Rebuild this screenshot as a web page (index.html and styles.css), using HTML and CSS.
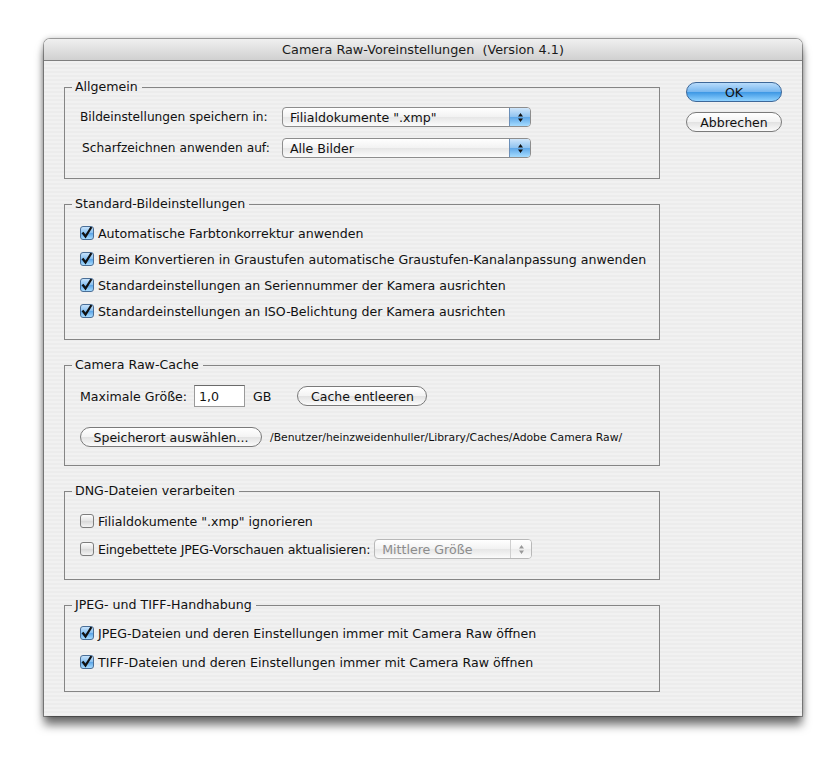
FILE: index.html
```html
<!DOCTYPE html>
<html lang="de">
<head>
    <meta charset="UTF-8">
    <title>Camera Raw-Voreinstellungen</title>
    <link rel="stylesheet" href="styles.css">
</head>
<body>
    <div class="window">
        <div class="titlebar">Camera Raw-Voreinstellungen&nbsp; (Version 4.1)</div>
        <div class="content">
            <div class="groups">
                <!-- Allgemein -->
                <fieldset class="group group-general">
                    <legend>Allgemein</legend>
                    <div class="row field-row">
                        <span class="field-label">Bildeinstellungen speichern in:</span>
                        <div class="popup">
                            <span class="popup-text">Filialdokumente ".xmp"</span>
                            <span class="popup-arrows">
                                <svg width="7" height="11" viewBox="0 0 7 11"><path d="M3.5 1 L6 4.5 H1 Z M3.5 10 L6 6.5 H1 Z" fill="#111"/></svg>
                            </span>
                        </div>
                    </div>
                    <div class="row field-row">
                        <span class="field-label second">Scharfzeichnen anwenden auf:</span>
                        <div class="popup">
                            <span class="popup-text">Alle Bilder</span>
                            <span class="popup-arrows">
                                <svg width="7" height="11" viewBox="0 0 7 11"><path d="M3.5 1 L6 4.5 H1 Z M3.5 10 L6 6.5 H1 Z" fill="#111"/></svg>
                            </span>
                        </div>
                    </div>
                </fieldset>

                <!-- Standard-Bildeinstellungen -->
                <fieldset class="group group-defaults">
                    <legend>Standard-Bildeinstellungen</legend>
                    <label class="row check checked"><span class="box"></span>Automatische Farbtonkorrektur anwenden</label>
                    <label class="row check checked"><span class="box"></span>Beim Konvertieren in Graustufen automatische Graustufen-Kanalanpassung anwenden</label>
                    <label class="row check checked"><span class="box"></span>Standardeinstellungen an Seriennummer der Kamera ausrichten</label>
                    <label class="row check checked"><span class="box"></span>Standardeinstellungen an ISO-Belichtung der Kamera ausrichten</label>
                </fieldset>

                <!-- Camera Raw-Cache -->
                <fieldset class="group group-cache">
                    <legend>Camera Raw-Cache</legend>
                    <div class="row cache-row">
                        <span>Maximale Größe:</span>
                        <span class="textfield">1,0</span>
                        <span class="unit">GB</span>
                        <span class="button cache-btn">Cache entleeren</span>
                    </div>
                    <div class="row path-row">
                        <span class="button path-btn">Speicherort auswählen...</span>
                        <span class="path">/Benutzer/heinzweidenhuller/Library/Caches/Adobe Camera Raw/</span>
                    </div>
                </fieldset>

                <!-- DNG -->
                <fieldset class="group group-dng">
                    <legend>DNG-Dateien verarbeiten</legend>
                    <label class="row check"><span class="box"></span>Filialdokumente ".xmp" ignorieren</label>
                    <div class="row check dng-row">
                        <span class="box"></span><span class="dng-label">Eingebettete JPEG-Vorschauen aktualisieren:</span>
                        <div class="popup popup-disabled">
                            <span class="popup-text">Mittlere Größe</span>
                            <span class="popup-arrows">
                                <svg width="7" height="11" viewBox="0 0 7 11"><path d="M3.5 1 L6 4.5 H1 Z M3.5 10 L6 6.5 H1 Z" fill="#999"/></svg>
                            </span>
                        </div>
                    </div>
                </fieldset>

                <!-- JPEG / TIFF -->
                <fieldset class="group group-jpeg">
                    <legend>JPEG- und TIFF-Handhabung</legend>
                    <label class="row check checked"><span class="box"></span>JPEG-Dateien und deren Einstellungen immer mit Camera Raw öffnen</label>
                    <label class="row check checked"><span class="box"></span>TIFF-Dateien und deren Einstellungen immer mit Camera Raw öffnen</label>
                </fieldset>
            </div>

            <div class="actions">
                <span class="button default-btn">OK</span>
                <span class="button">Abbrechen</span>
            </div>
        </div>
    </div>
</body>
</html>
```

FILE: styles.css
```css
/* Page */
html, body {
    height: 100%;
}
body {
    margin: 0;
    padding: 39px 0 0 44px;
    box-sizing: border-box;
    background: #fff;
    font-family: "DejaVu Sans", "Liberation Sans", sans-serif;
    font-size: 12.6px;
    color: #111;
}

/* Window */
.window {
    width: 758px;
    height: 677px;
    box-sizing: border-box;
    border-radius: 6px 6px 0 0;
    background: repeating-linear-gradient(#ececec 0, #ececec 2px, #f1f1f1 2px, #f1f1f1 4px);
    box-shadow: 0 9px 10px rgba(0, 0, 0, 0.55), 0 0 6px rgba(0, 0, 0, 0.3), 0 0 0 1px rgba(0, 0, 0, 0.3);
}
.titlebar {
    height: 21px;
    line-height: 22px;
    text-align: center;
    font-size: 12.8px;
    color: #1a1a1a;
    border-radius: 6px 6px 0 0;
    background: linear-gradient(#f0f0f0, #d0d0d0);
    border-bottom: 1px solid #7f7f7f;
}
.content {
    display: flex;
    padding: 18px 0 0 20px;
}

/* Group boxes */
.groups {
    width: 596px;
    display: flex;
    flex-direction: column;
    gap: 17px;
}
.group {
    margin: 0;
    padding: 0 0 0 15px;
    border: 1px solid #858585;
    min-width: 0;
    box-sizing: border-box;
}
.group legend {
    padding: 0 4px 0 3px;
    margin-left: -8px;
    line-height: 16px;
}
.row {
    display: flex;
    align-items: center;
    white-space: nowrap;
}
.group-general { padding-top: 12px; padding-bottom: 20px; }
.group-general .row + .row { margin-top: 11px; }
.group-defaults { padding-top: 12px; padding-bottom: 19px; }
.group-defaults .row + .row { margin-top: 8px; }
.group-cache { padding-top: 12px; padding-bottom: 18px; }
.group-dng { padding-top: 13px; padding-bottom: 20px; }
.group-dng .row + .row { margin-top: 9px; }
.group-jpeg { padding-top: 11px; padding-bottom: 20px; }
.group-jpeg .row + .row { margin-top: 11px; }

/* Popup menus */
.field-row { height: 20px; }
.field-label {
    width: 202px;
    font-size: 12.2px;
}
.field-label.second { padding-left: 2px; width: 200px; }
.popup {
    display: flex;
    align-items: center;
    width: 249px;
    height: 20px;
    box-sizing: border-box;
    border: 1px solid #8d8d8d;
    border-radius: 4px;
    background: linear-gradient(#ffffff, #f2f2f2 50%, #e6e6e6 51%, #fbfbfb);
    overflow: hidden;
}
.popup-text {
    flex: 1;
    padding-left: 7px;
}
.popup-arrows {
    width: 20px;
    height: 100%;
    display: flex;
    align-items: center;
    justify-content: center;
    border-left: 1px solid #6b8fb8;
    background: linear-gradient(#cfe6fb, #8ec2ef 50%, #5ea7e8 51%, #a5dcff);
}
.dng-label { letter-spacing: -0.2px; }
.popup-disabled {
    width: 158px;
    height: 20px;
    margin-left: 4px;
    border-color: #b8b8b8;
    color: #8c8c8c;
}
.popup-disabled .popup-arrows {
    border-left: 1px solid #cfcfcf;
    background: linear-gradient(#ffffff, #f4f4f4 50%, #ececec 51%, #fafafa);
}

/* Checkboxes */
.check {
    height: 18px;
}
.check .box {
    width: 14px;
    height: 14px;
    margin-right: 4px;
    box-sizing: border-box;
    border: 1px solid #7d7d7d;
    border-radius: 3px;
    background: linear-gradient(#fdfdfd, #e3e3e3 50%, #d8d8d8 51%, #f4f4f4);
    flex-shrink: 0;
}
.check.checked .box {
    border-color: #4a6e96;
    background:
        url("data:image/svg+xml,%3Csvg xmlns='http://www.w3.org/2000/svg' width='14' height='14'%3E%3Cpath d='M2.5 6.5 L5.5 10.5 L11.5 1' stroke='%23111' stroke-width='2.2' fill='none'/%3E%3C/svg%3E") -1px -1px no-repeat,
        linear-gradient(#c6e2fb, #87bfef 50%, #5aa3e6 51%, #a8dcff);
}
.dng-row { height: 20px; }

/* Buttons */
.button {
    display: inline-flex;
    align-items: center;
    justify-content: center;
    height: 20px;
    box-sizing: border-box;
    padding: 0;
    font-size: 12.5px;
    white-space: nowrap;
    border: 1px solid #7a7a7a;
    border-radius: 10px;
    background: linear-gradient(#ffffff, #f3f3f3 50%, #e2e2e2 51%, #fbfbfb);
}
.default-btn {
    border-color: #3d6798;
    background: linear-gradient(#b9dcfb, #76b6ef 50%, #3d97e4 51%, #8fd2ff);
}

/* Cache group */
.cache-row { height: 22px; }
.textfield {
    width: 51px;
    height: 22px;
    margin-left: 7px;
    padding-left: 4px;
    box-sizing: border-box;
    line-height: 21px;
    background: #fff;
    border: 1px solid #9a9a9a;
    border-top-color: #6a6a6a;
}
.unit { margin-left: 8px; }
.cache-btn {
    width: 130px;
    margin-left: 26px;
}
.path-row {
    height: 20px;
    margin-top: 20px;
}
.path-btn {
    width: 182px;
}
.path {
    margin-left: 8px;
    font-size: 10.8px;
}

/* Right-hand buttons */
.actions {
    display: flex;
    flex-direction: column;
    gap: 10px;
    width: 96px;
    margin-left: 26px;
    padding-top: 3px;
}
.actions .button { width: 96px; }
```
